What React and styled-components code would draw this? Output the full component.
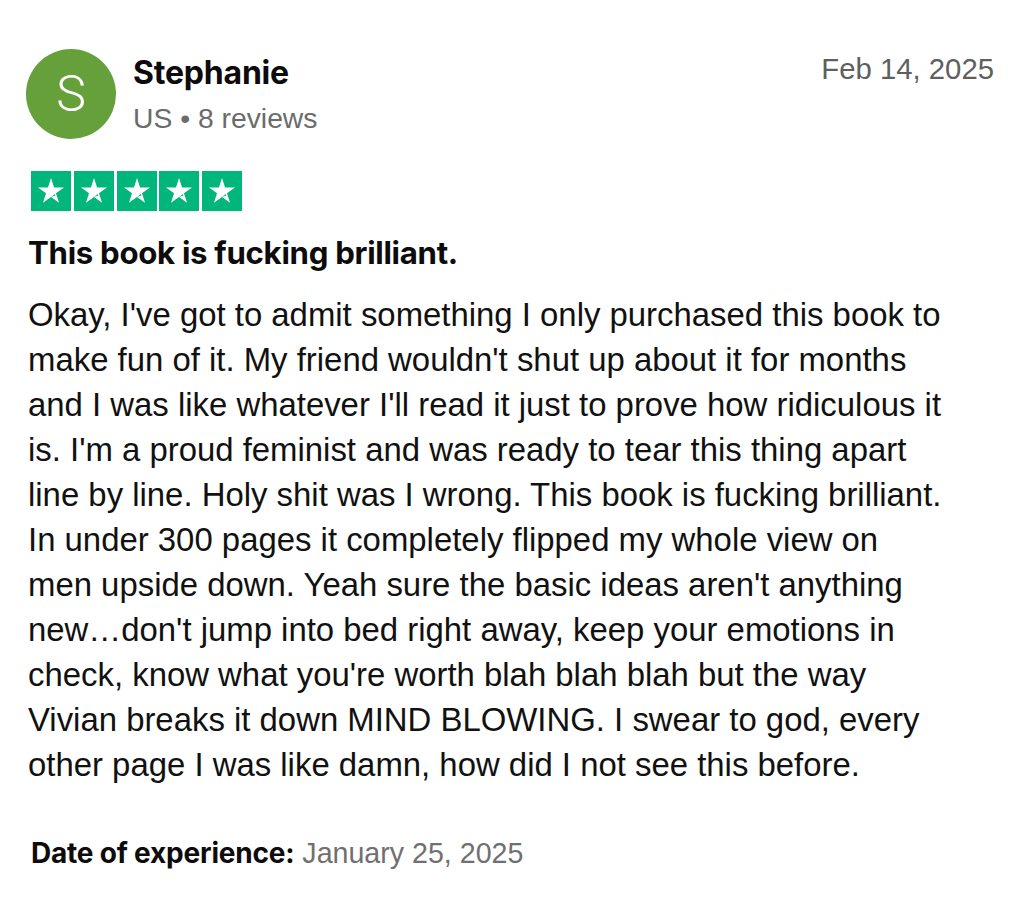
import styled, { createGlobalStyle } from 'styled-components'

const GlobalStyle = createGlobalStyle`
  html, body {
    margin: 0;
    padding: 0;
    background: #fff;
  }
  body {
    font-family: "Liberation Sans", Arial, sans-serif;
    color: #191919;
  }
`

const Card = styled.article`
  width: 1022px;
  box-sizing: border-box;
  padding: 49px 28px 40px 26px;
`

const Header = styled.header`
  display: flex;
  align-items: flex-start;
`

const Avatar = styled.div`
  width: 90px;
  height: 90px;
  border-radius: 50%;
  background: #66a03b;
  color: #fff;
  display: flex;
  align-items: center;
  justify-content: center;
  font-family: Roboto, "Liberation Sans", sans-serif;
  font-weight: 300;
  font-size: 50px;
  line-height: 1;
  flex-shrink: 0;
`

const Who = styled.div`
  display: flex;
  flex-direction: column;
  margin-left: 17px;
  padding-top: 6px;
  flex: 1;
`

const Name = styled.div`
  font-family: Inter, "Liberation Sans", sans-serif;
  font-weight: 700;
  font-size: 32px;
  color: #0d0b0b;
  line-height: 36px;
  letter-spacing: -0.2px;
`

const Meta = styled.div`
  font-size: 28.3px;
  color: #6b6b6b;
  line-height: 36px;
  margin-top: 9px;
`

const PostDate = styled.time`
  font-size: 29.3px;
  color: #5f5f5f;
  line-height: 36px;
  margin-top: 2px;
`

const Stars = styled.div`
  display: flex;
  gap: 2.75px;
  margin: 32px 0 0 5px;
`

const StarBox = styled.div`
  width: 40px;
  height: 40px;
  background: #00b67a;
  display: flex;
  align-items: center;
  justify-content: center;
`

const Title = styled.h2`
  margin: 24px 0 0 2px;
  font-family: Inter, "Liberation Sans", sans-serif;
  font-weight: 700;
  font-size: 31.2px;
  line-height: 36px;
  color: #0d0b0b;
  letter-spacing: -0.3px;
`

const Body = styled.p`
  margin: 21px 0 0 2px;
  max-width: 915px;
  font-size: 32.9px;
  line-height: 45px;
  color: #111;
`

const Experience = styled.div`
  margin: 48px 0 0 5px;
  font-size: 28.6px;
  line-height: 36px;
  color: #707070;

  strong {
    font-family: Inter, "Liberation Sans", sans-serif;
    font-weight: 700;
    color: #0d0b0b;
    font-size: 28px;
    letter-spacing: -0.2px;
  }
`

function Star() {
  return (
    <svg width="30" height="30" viewBox="0 0 24 24">
      <path
        fill="#fff"
        d="M12 1.6l2.45 7.55h7.95l-6.43 4.67 2.45 7.55L12 16.7l-6.42 4.67 2.45-7.55L1.6 9.15h7.95z"
      />
      <path fill="#00b67a" d="M12 16.7l3.1-2.25 0.35 1.1z" />
    </svg>
  )
}

export default function App() {
  return (
    <>
      <GlobalStyle />
      <Card>
        <Header>
          <Avatar>S</Avatar>
          <Who>
            <Name>Stephanie</Name>
            <Meta>US • 8 reviews</Meta>
          </Who>
          <PostDate>Feb 14, 2025</PostDate>
        </Header>
        <Stars>
          {[0, 1, 2, 3, 4].map((i) => (
            <StarBox key={i}>
              <Star />
            </StarBox>
          ))}
        </Stars>
        <Title>This book is fucking brilliant.</Title>
        <Body>
          Okay, I've got to admit something I only purchased this book to make fun of it. My
          friend wouldn't shut up about it for months and I was like whatever I'll read it just to
          prove how ridiculous it is. I'm a proud feminist and was ready to tear this thing apart
          line by line. Holy shit was I wrong. This book is fucking brilliant. In under 300 pages
          it completely flipped my whole view on men upside down. Yeah sure the basic ideas aren't
          anything new…don't jump into bed right away, keep your emotions in check, know what
          you're worth blah blah blah but the way Vivian breaks it down MIND BLOWING. I swear to
          god, every other page I was like damn, how did I not see this before.
        </Body>
        <Experience>
          <strong>Date of experience:</strong> January 25, 2025
        </Experience>
      </Card>
    </>
  )
}
